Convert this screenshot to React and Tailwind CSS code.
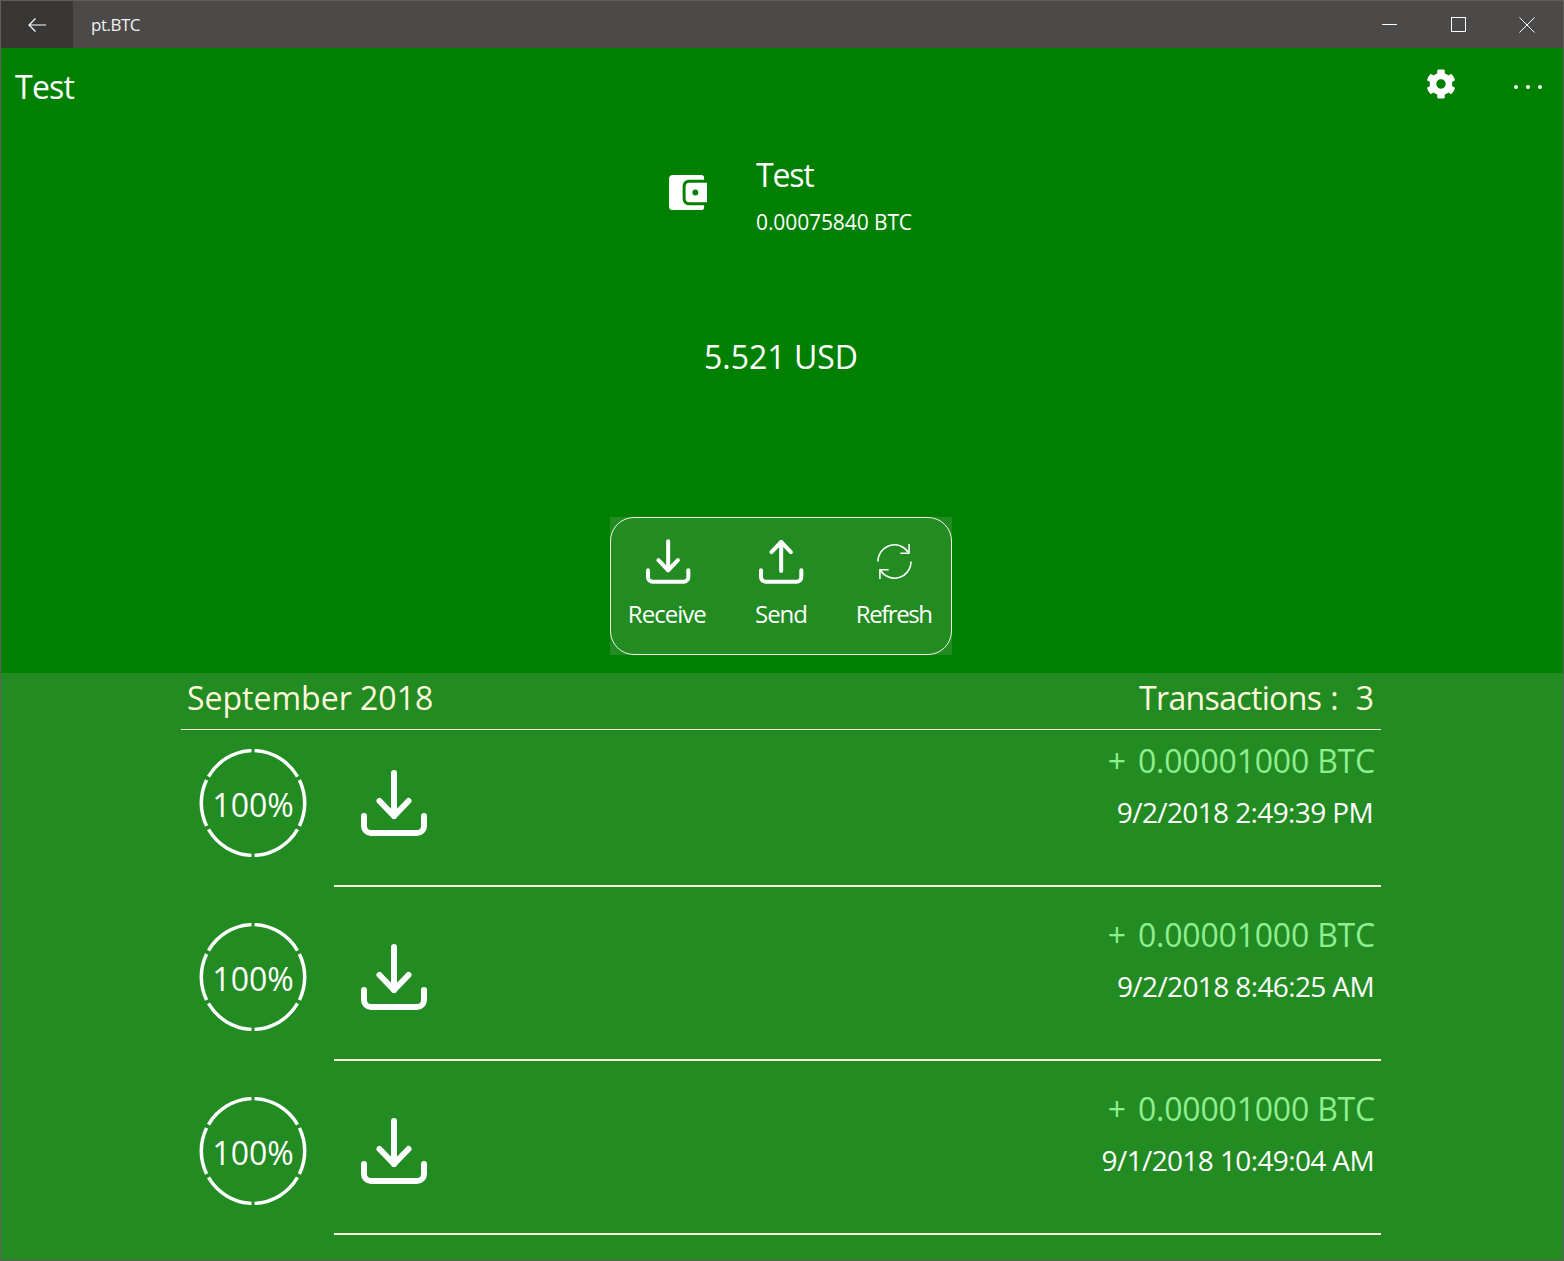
import { FaCog } from "react-icons/fa";

const font = "font-['Open_Sans',sans-serif]";

function TrayDown({ className }) {
  return (
    <svg viewBox="0 0 67 66" fill="none" stroke="currentColor" strokeWidth="6" strokeLinecap="round" strokeLinejoin="round" className={className}>
      <path d="M33 3V46" />
      <path d="M18.5 31L33 46L47.5 31" />
      <path d="M3 46V56a7 7 0 0 0 7 7H56a7 7 0 0 0 7-7V46" />
    </svg>
  );
}

function TrayUp({ className }) {
  return (
    <svg viewBox="0 0 67 66" fill="none" stroke="currentColor" strokeWidth="6" strokeLinecap="round" strokeLinejoin="round" className={className}>
      <path d="M33 4V47" />
      <path d="M18.5 19L33 4L47.5 19" />
      <path d="M3 46V56a7 7 0 0 0 7 7H56a7 7 0 0 0 7-7V46" />
    </svg>
  );
}

function RefreshIcon({ className }) {
  return (
    <svg viewBox="0 0 36 38" fill="none" stroke="currentColor" strokeWidth="1.6" className={className}>
      <path d="M1 19A17 17 0 0 1 32.5 10" />
      <path d="M33 1V10.5H24" />
      <path d="M35 19A17 17 0 0 1 3.5 28" />
      <path d="M3 37V27.5H12" />
    </svg>
  );
}

function WalletIcon() {
  return (
    <svg viewBox="0 0 40 38" className="w-[39px] h-[37px]">
      <path fill="white" d="M4 0H33a3 3 0 0 1 3 3V5H20a6 6 0 0 0-6 6V25a6 6 0 0 0 6 6H36v2a3 3 0 0 1-3 3H4a4 4 0 0 1-4-4V4a4 4 0 0 1 4-4Z" />
      <path fill="white" d="M17 12a4 4 0 0 1 4-4H39V28H21a4 4 0 0 1-4-4Z" />
      <circle cx="27" cy="18" r="3" fill="#008000" />
    </svg>
  );
}

function Ring() {
  // six arcs with small gaps, 60 degrees apart
  const arcs = [
    "M55.5 1.6A52.5 52.5 0 0 1 98.5 27.6",
    "M100.4 31A52.5 52.5 0 0 1 100.4 77",
    "M98.5 80.4A52.5 52.5 0 0 1 55.5 106.4",
    "M52.5 106.4A52.5 52.5 0 0 1 9.5 80.4",
    "M7.6 77A52.5 52.5 0 0 1 7.6 31",
    "M9.5 27.6A52.5 52.5 0 0 1 52.5 1.6",
  ];
  return (
    <div className="relative w-[108px] h-[108px] flex items-center justify-center">
      <svg viewBox="0 0 108 108" fill="none" stroke="white" strokeWidth="3.5" className="absolute inset-0">
        {arcs.map((d) => (
          <path key={d} d={d} />
        ))}
      </svg>
      <span className="text-[32px] leading-none text-white mt-[4px]">100%</span>
    </div>
  );
}

const transactions = [
  { date: "9/2/2018 2:49:39 PM", right: "pr-[8px]" },
  { date: "9/2/2018 8:46:25 AM", right: "pr-[7px]" },
  { date: "9/1/2018 10:49:04 AM", right: "pr-[7px]" },
];

function Row({ tx }) {
  return (
    <div className="h-[174px] relative">
      <div className="h-[155px] flex">
        <div className="w-[153px] pl-[18px] pt-[19px]">
          <Ring />
        </div>
        <div className="pl-[27px] pt-[40px]">
          <TrayDown className="w-[67px] h-[66px] text-white" />
        </div>
        <div className="flex-1 flex flex-col items-end pt-[9px]">
          <div className="text-[32px] leading-[44px] text-[#90ee90] pr-[6px] flex">
            <span className="mr-[12px]">+</span>
            <span className="tracking-[-0.2px]">0.00001000 BTC</span>
          </div>
          <div className={`text-[28px] leading-[38px] mt-[10px] text-white tracking-[-0.62px] ${tx.right}`}>{tx.date}</div>
        </div>
      </div>
      <div className="ml-[153px] h-[2px] bg-[#fff8dc]" />
    </div>
  );
}

function ActionButton({ label, labelClass, children }) {
  return (
    <div className="flex-1 flex flex-col items-center">
      <div className="h-[46px] flex items-center justify-center">{children}</div>
      <div className={`text-[24px] leading-[32px] mt-[14px] text-white ${labelClass}`}>{label}</div>
    </div>
  );
}

export default function App() {
  return (
    <div className={`h-[1261px] flex flex-col border border-[#5f5e5d] ${font}`}>
      {/* title bar */}
      <div className="h-[47px] shrink-0 bg-[#4c4a48] flex items-center text-white">
        <div className="w-[72px] h-full bg-[#383736] flex items-center justify-center">
          <svg viewBox="0 0 20 16" fill="none" stroke="white" strokeWidth="1.2" className="w-5 h-4">
            <path d="M19 8H2M8.5 1.5L2 8l6.5 6.5" />
          </svg>
        </div>
        <div className="ml-[18px] text-[17px] tracking-[-0.5px] text-[#f1f1f1]">pt.BTC</div>
        <div className="ml-auto mr-[1px] flex items-center">
          <div className="w-[69px] flex justify-center">
            <div className="w-[15px] h-px bg-white" />
          </div>
          <div className="w-[69px] flex justify-center">
            <div className="w-[15px] h-[15px] border border-white" />
          </div>
          <div className="w-[69px] flex justify-center">
            <svg viewBox="0 0 16 16" stroke="white" strokeWidth="1" className="w-4 h-4 -ml-px">
              <path d="M.5.5l15 15M15.5.5l-15 15" />
            </svg>
          </div>
        </div>
      </div>

      {/* wallet summary */}
      <div className="h-[625px] shrink-0 bg-[#008000] text-white flex flex-col">
        <div className="h-[78px] flex items-center pl-[14px]">
          <div className="text-[32px] tracking-[-0.75px] leading-[44px]">Test</div>
          <div className="ml-auto mr-[7px] flex items-center">
            <FaCog className="w-[30px] h-[30px] mb-[6px]" />
            <div className="w-[100px] flex justify-center gap-[8px] pl-[44px]">
              <span className="w-[4px] h-[4px] rounded-full bg-white" />
              <span className="w-[4px] h-[4px] rounded-full bg-white" />
              <span className="w-[4px] h-[4px] rounded-full bg-white" />
            </div>
          </div>
        </div>

        <div className="mt-[27px] ml-[668px] flex">
          <div className="pt-[22px] w-[87px]">
            <WalletIcon />
          </div>
          <div>
            <div className="text-[32px] leading-[44px] tracking-[-1.2px]">Test</div>
            <div className="text-[21px] leading-[28px] mt-[11px] tracking-[-0.1px]">0.00075840 BTC</div>
          </div>
        </div>

        <div className="mt-[99px] text-center text-[32px] leading-[44px] pr-[2px]">5.521 USD</div>

        <div className="mt-[138px] ml-[609px] w-[342px] h-[138px] bg-[#228b22]">
          <div className="w-full h-full rounded-[24px] border-[1.5px] border-[#f3f3e8] flex px-[1px] pt-[20px]">
            <ActionButton label="Receive" labelClass="tracking-[-0.95px] mr-[3px]">
              <TrayDown className="w-[45px] h-[45px]" />
            </ActionButton>
            <ActionButton label="Send" labelClass="tracking-[-1px]">
              <TrayUp className="w-[45px] h-[45px]" />
            </ActionButton>
            <ActionButton label="Refresh" labelClass="tracking-[-1.45px]">
              <RefreshIcon className="w-[35px] h-[37px] ml-[2px]" />
            </ActionButton>
          </div>
        </div>
      </div>

      {/* transactions */}
      <div className="flex-1 bg-[#228b22]">
        <div className="ml-[180px] w-[1200px]">
          <div className="h-[57px] flex justify-between border-b border-[#fff8dc] text-[#fff8dc] text-[32px] leading-[50px] pl-[6px] pr-[7px]">
            <div>September 2018</div>
            <div className="flex">
              <span className="tracking-[-0.65px]">Transactions</span>
              <span className="ml-[9px]">:</span>
              <span className="ml-[17px]">3</span>
            </div>
          </div>
          {transactions.map((tx) => (
            <Row key={tx.date} tx={tx} />
          ))}
        </div>
      </div>
    </div>
  );
}
